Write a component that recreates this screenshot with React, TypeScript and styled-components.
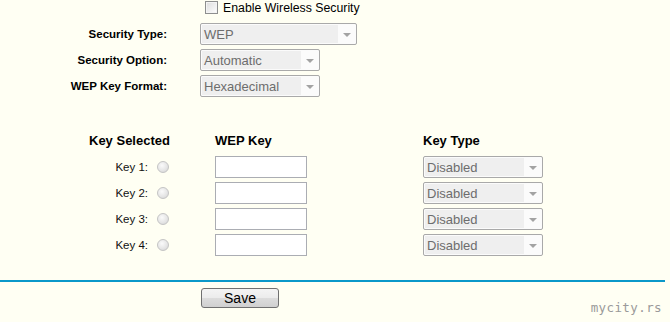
import React from 'react'
import styled, {createGlobalStyle} from 'styled-components'

const GlobalStyle = createGlobalStyle`
	html, body {
		margin: 0;
		padding: 0;
		background: #fffff3;
	}
	body {
		font-family: "Liberation Sans", Arial, sans-serif;
		color: #000;
	}
`

const Page = styled.div`
	position: relative;
	width: 670px;
	height: 322px;
	overflow: hidden;
	display: flex;
	flex-direction: column;
	background: #fffff3;
`

const CheckRow = styled.label`
	display: flex;
	align-items: center;
	height: 15px;
	padding-left: 205px;
	font-size: 12.3px;
	color: #000;
`

const CheckBox = styled.span`
	width: 11px;
	height: 11px;
	margin-right: 5px;
	border: 1px solid #8e8f8f;
	background: linear-gradient(135deg, #dcdcdc 0%, #f4f4f4 70%, #ffffff 100%);
	box-shadow: inset 0 0 0 1px #f4f4f4;
`

const SettingsGrid = styled.div`
	display: grid;
	grid-template-columns: 167px auto;
	grid-auto-rows: 22px;
	column-gap: 33px;
	row-gap: 4px;
	margin-top: 8px;
`

const FieldLabel = styled.div`
	display: flex;
	align-items: center;
	justify-content: flex-end;
	font-size: 11.5px;
	font-weight: bold;
	white-space: nowrap;
`

const SelectShell = styled.div<{$width: number}>`
	box-sizing: border-box;
	display: flex;
	width: ${p => p.$width}px;
	height: 22px;
	padding: 1px;
	border: 1px solid #a9a9a9;
	border-radius: 2px;
	background: #fbfbfb;
`

const SelectValue = styled.div`
	flex: 1;
	display: flex;
	align-items: center;
	padding-left: 2px;
	background: #efefef;
	color: #6d6d6d;
	font-size: 13px;
	white-space: nowrap;
`

const SelectArrow = styled.div`
	width: 17px;
	display: flex;
	align-items: center;
	justify-content: center;

	&::after {
		content: '';
		border-left: 4px solid transparent;
		border-right: 4px solid transparent;
		border-top: 4px solid #a3a3a3;
		margin-top: 1px;
	}
`

const KeyGrid = styled.div`
	display: grid;
	grid-template-columns: 126px 208px 120px;
	grid-template-rows: 19px repeat(4, 22px);
	row-gap: 4px;
	margin-top: 36px;
	padding-left: 89px;
`

const ColumnHead = styled.div`
	font-size: 13px;
	font-weight: bold;
	line-height: 15px;
	white-space: nowrap;
`

const KeyCell = styled.div`
	display: flex;
	align-items: center;
`

const KeyName = styled.span`
	width: 59px;
	text-align: right;
	font-size: 11.5px;
	color: #111;
`

const Radio = styled.span`
	box-sizing: border-box;
	width: 12px;
	height: 12px;
	margin-left: 9px;
	border-radius: 50%;
	border: 1px solid #c4c4c4;
	background: radial-gradient(circle at 40% 35%, #fafafa 0%, #e6e6e6 55%, #d2d2d2 100%);
`

const TextBox = styled.input`
	box-sizing: border-box;
	width: 92px;
	height: 22px;
	margin: 0;
	padding: 0 3px;
	border: 1px solid #abadb3;
	background: #fff;
	font-family: inherit;
	font-size: 13px;
	outline: none;
`

const Divider = styled.div`
	width: 665px;
	height: 2px;
	margin-top: 24px;
	background: #0b98c9;
`

const Footer = styled.div`
	display: flex;
	padding-left: 201px;
	margin-top: 6px;
`

const SaveButton = styled.button`
	box-sizing: border-box;
	width: 78px;
	height: 20px;
	padding: 0;
	border: 1px solid #707070;
	border-radius: 3px;
	background: linear-gradient(#f4f4f4 0%, #ececec 48%, #dcdcdc 52%, #d0d0d0 100%);
	font-family: "Liberation Sans", Arial, sans-serif;
	font-size: 14px;
	color: #000;
	line-height: 18px;
`

const Watermark = styled.div`
	position: absolute;
	right: 8px;
	bottom: 7px;
	font-family: "DejaVu Sans Mono", "Liberation Mono", monospace;
	font-size: 12.5px;
	letter-spacing: 0.4px;
	color: #9a9a9a;
`

const Select = ({value, width}: {value: string, width: number}) => (
	<SelectShell $width={width}>
		<SelectValue>{value}</SelectValue>
		<SelectArrow />
	</SelectShell>
)

const settings = [
	{label: 'Security Type:', value: 'WEP', width: 157},
	{label: 'Security Option:', value: 'Automatic', width: 120},
	{label: 'WEP Key Format:', value: 'Hexadecimal', width: 120},
]

const keys = [1, 2, 3, 4]

export default function App() {
	return (
		<Page>
			<GlobalStyle />
			<CheckRow>
				<CheckBox />
				Enable Wireless Security
			</CheckRow>

			<SettingsGrid>
				{settings.map(s => (
					<React.Fragment key={s.label}>
						<FieldLabel>{s.label}</FieldLabel>
						<Select value={s.value} width={s.width} />
					</React.Fragment>
				))}
			</SettingsGrid>

			<KeyGrid>
				<ColumnHead>Key Selected</ColumnHead>
				<ColumnHead>WEP Key</ColumnHead>
				<ColumnHead>Key Type</ColumnHead>
				{keys.map(k => (
					<React.Fragment key={k}>
						<KeyCell>
							<KeyName>Key {k}:</KeyName>
							<Radio />
						</KeyCell>
						<KeyCell>
							<TextBox type="text" />
						</KeyCell>
						<KeyCell>
							<Select value="Disabled" width={120} />
						</KeyCell>
					</React.Fragment>
				))}
			</KeyGrid>

			<Divider />

			<Footer>
				<SaveButton>Save</SaveButton>
			</Footer>

			<Watermark>mycity.rs</Watermark>
		</Page>
	)
}
